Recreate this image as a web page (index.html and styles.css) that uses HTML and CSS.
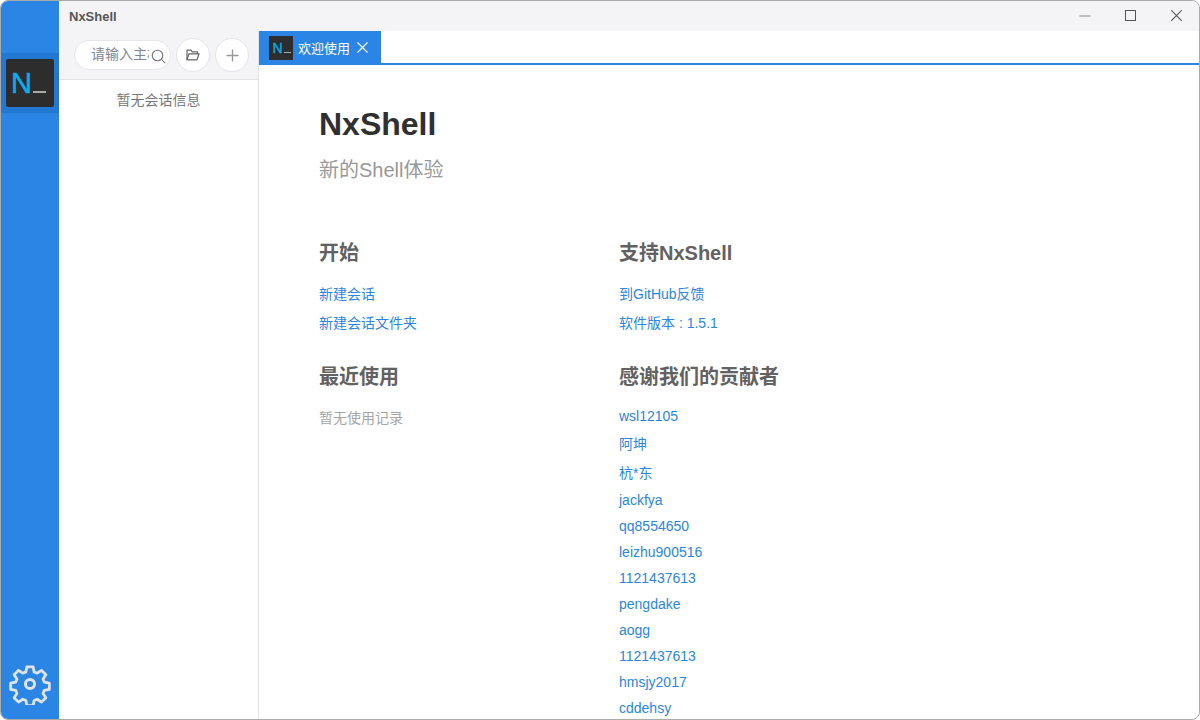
FILE: index.html
```html
<!DOCTYPE html>
<html lang="zh">
<head>
<meta charset="utf-8">
<title>NxShell</title>
<link rel="stylesheet" href="styles.css">
</head>
<body>
<div class="window">
  <aside class="rail">
    <div class="rail-item">
      <div class="logo logo-big"><span class="logo-n">N</span><span class="logo-u"></span></div>
    </div>
    <svg class="gear" viewBox="0 0 42 42" width="42" height="42" fill="none" stroke="#dfe3e8" stroke-width="3" stroke-linejoin="round">
      <path d="M17.6 2.6h6.8l1 5.4 3.4 1.4 4.5-3.1 4.8 4.8-3.1 4.5 1.4 3.4 5.4 1v6.8l-5.4 1-1.4 3.4 3.1 4.5-4.8 4.8-4.5-3.1-3.4 1.4-1 5.4h-6.8l-1-5.4-3.4-1.4-4.5 3.1-4.8-4.8 3.1-4.5-1.4-3.4-5.4-1v-6.8l5.4-1 1.4-3.4-3.1-4.5 4.8-4.8 4.5 3.1 3.4-1.4z" transform="translate(21 21) scale(.93) translate(-21 -21)"/>
      <circle cx="21" cy="21" r="4.6"/>
    </svg>
  </aside>
  <div class="main">
    <header class="titlebar">
      <span class="app-name">NxShell</span>
      <div class="win-controls">
        <svg width="12" height="12" viewBox="0 0 12 12"><path d="M0.5 6h11" stroke="#888" stroke-width="1.2"/></svg>
        <svg width="12" height="12" viewBox="0 0 12 12" fill="none"><rect x=".5" y=".5" width="10" height="10" stroke="#555"/></svg>
        <svg width="12" height="12" viewBox="0 0 12 12"><path d="M.2.2l10.6 10.6M10.8.2L.2 10.8" stroke="#555" stroke-width="1.1"/></svg>
      </div>
    </header>
    <div class="body">
      <aside class="sessions">
        <div class="toolbar">
          <div class="search">
            <span class="search-text">请输入主机</span>
            <svg class="search-icon" width="15" height="15" viewBox="0 0 15 15" fill="none" stroke="#777" stroke-width="1.1"><circle cx="6.5" cy="6.5" r="5.3"/><path d="M10.4 10.4l3.8 3.8"/></svg>
          </div>
          <div class="round-btn">
            <svg width="14" height="12" viewBox="0 0 14 12" fill="none" stroke="#666" stroke-width="1.2" stroke-linejoin="round"><path d="M1 10.8V1.2h4l1.2 1.6h5.4v2"/><path d="M1 10.8h10l2-6H3z"/></svg>
          </div>
          <div class="round-btn">
            <svg width="13" height="13" viewBox="0 0 13 13"><path d="M6.5.5v12M.5 6.5h12" stroke="#999" stroke-width="1.4"/></svg>
          </div>
        </div>
        <p class="empty-sessions">暂无会话信息</p>
      </aside>
      <section class="content">
        <div class="tabs">
          <div class="tab">
            <div class="logo logo-small"><span class="logo-n">N</span><span class="logo-u"></span></div>
            <span class="tab-label">欢迎使用</span>
            <svg width="11" height="11" viewBox="0 0 11 11"><path d="M.5.5l10 10M10.5.5l-10 10" stroke="#fff" stroke-width="1.1"/></svg>
          </div>
        </div>
        <div class="welcome">
          <h1 class="title">NxShell</h1>
          <p class="subtitle">新的Shell体验</p>
          <div class="columns">
            <div class="col">
              <h2 class="heading">开始</h2>
              <a class="link">新建会话</a>
              <a class="link">新建会话文件夹</a>
              <h2 class="heading heading-second">最近使用</h2>
              <p class="muted">暂无使用记录</p>
            </div>
            <div class="col">
              <h2 class="heading">支持NxShell</h2>
              <a class="link">到GitHub反馈</a>
              <a class="link">软件版本 : 1.5.1</a>
              <h2 class="heading heading-second">感谢我们的贡献者</h2>
              <div class="people">
                <a class="person">wsl12105</a>
                <a class="person person-cjk">阿坤</a>
                <a class="person person-cjk">杭*东</a>
                <a class="person">jackfya</a>
                <a class="person">qq8554650</a>
                <a class="person">leizhu900516</a>
                <a class="person">1121437613</a>
                <a class="person">pengdake</a>
                <a class="person">aogg</a>
                <a class="person">1121437613</a>
                <a class="person">hmsjy2017</a>
                <a class="person">cddehsy</a>
              </div>
            </div>
          </div>
        </div>
      </section>
    </div>
  </div>
</div>
</body>
</html>
```
FILE: styles.css
```css
* { box-sizing: border-box; }
html, body { margin: 0; height: 100%; overflow: hidden; background: #fff; }
body { font-family: "Liberation Sans", "Noto Sans CJK SC", sans-serif; font-size: 14px; color: #515a6e; }
.window { width: 1200px; height: 720px; display: flex; border: 1px solid #aaa; border-radius: 8px; overflow: hidden; background: #fff; }
.rail { width: 58px; flex: none; background: #2b85e4; display: flex; flex-direction: column; align-items: center; justify-content: space-between; padding: 52px 0 14px; }
.rail-item { width: 100%; height: 60px; background: #2278d2; display: flex; align-items: center; justify-content: center; }
.logo { background: #2d2d2d; display: flex; align-items: baseline; justify-content: center; overflow: hidden; font-family: "Liberation Sans", sans-serif; }
.logo-big { width: 48px; height: 48px; border-radius: 2px; padding: 8px 3px 0 0; gap: 1px; }
.logo-big .logo-n { font-size: 29px; line-height: 32px; -webkit-text-stroke: .5px #0aaeea; }
.logo-big .logo-u { width: 13px; height: 2px; margin-bottom: -3px; }
.logo-small { width: 24px; height: 24px; padding: 4px 0 0 1px; gap: 1px; }
.logo-small .logo-n { font-size: 14px; line-height: 16px; -webkit-text-stroke: .3px #0aaeea; }
.logo-small .logo-u { width: 7px; height: 1px; margin-bottom: -1px; }
.logo-n { color: #0aaeea; }
.logo-u { background: #aaa; display: block; }
.gear { display: block; margin-right: 1px; }
.main { flex: 1; min-width: 0; display: flex; flex-direction: column; }
.titlebar { height: 30px; flex: none; background: #f4f4f6; display: flex; align-items: center; justify-content: space-between; padding-left: 10px; }
.app-name { font-size: 13px; font-weight: bold; color: #555; padding-top: 1px; }
.win-controls { display: flex; gap: 34px; padding-right: 16px; }
.body { flex: 1; min-height: 0; display: flex; }
.sessions { width: 200px; flex: none; border-right: 1px solid #e4e4e6; display: flex; flex-direction: column; }
.toolbar { height: 49px; flex: none; background: #f4f4f6; border-bottom: 1px solid #e4e4e6; display: flex; align-items: center; padding: 0 10px 0 15px; gap: 5px; }
.search { width: 97px; height: 30px; border: 1px solid #e4e6ea; border-radius: 15px; background: #fff; display: flex; align-items: center; padding: 0 4px 0 16px; gap: 2px; color: #808695; font-size: 14px; }
.search-text { width: 58px; overflow: hidden; white-space: nowrap; line-height: 20px; margin-top: -2px; }
.search-icon { flex: none; margin-top: 2px; }
.round-btn { width: 34px; height: 34px; flex: none; border: 1px solid #e4e6ea; border-radius: 50%; background: #fff; display: flex; align-items: center; justify-content: center; }
.empty-sessions { margin: 9px 0 0; text-align: center; font-size: 14px; color: #777; }
.content { flex: 1; min-width: 0; display: flex; flex-direction: column; }
.tabs { height: 34px; flex: none; border-bottom: 2px solid #2b85e4; display: flex; }
.tab { width: 122px; height: 33px; background: #2b85e4; color: #fff; display: flex; align-items: center; padding: 0 12px 0 10px; font-size: 13px; }
.tab-label { margin: 0 7px 0 5px; white-space: nowrap; }
.welcome { flex: 1; min-height: 0; padding: 40px 60px 0; overflow: hidden; }
.title { margin: 0; font-size: 32px; line-height: 38px; font-weight: bold; color: #303030; }
.subtitle { margin: 14px 0 0; font-size: 20px; line-height: 26px; color: #999; }
.columns { display: flex; margin-top: 57px; }
.col { width: 300px; flex: none; }
.heading { margin: 0 0 19px; font-size: 20px; line-height: 26px; font-weight: bold; color: #626262; }
.heading-second { margin: 31px 0 18px; }
.link { display: block; font-size: 14px; line-height: 19px; margin-bottom: 10px; color: #2b85e4; }
.muted { margin: 0; font-size: 14px; line-height: 20px; color: #a5a5a5; }
.people { display: flex; flex-direction: column; }
.person { font-size: 14px; line-height: 16px; margin-bottom: 10px; color: #2b85e4; }
.person-cjk { line-height: 20px; margin-bottom: 9px; }
```
